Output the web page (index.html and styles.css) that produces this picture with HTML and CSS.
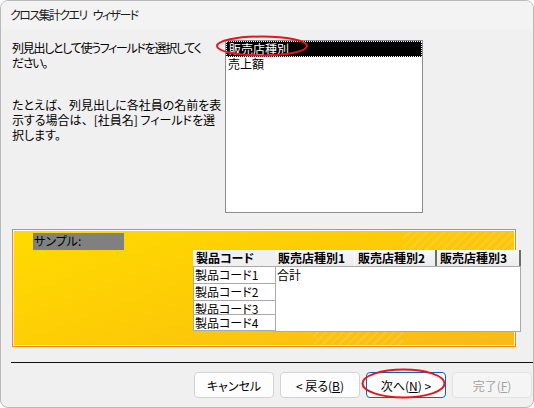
FILE: index.html
```html
<!DOCTYPE html>
<html lang="ja">

<head>
  <meta charset="UTF-8">
  <meta name="viewport" content="width=device-width, initial-scale=1">
  <title>クロス集計クエリ ウィザード</title>
  <link rel="stylesheet" href="styles.css">
</head>

<body>

  <div class="window">
    <div class="titlebar">クロス集計クエリ ウィザード</div>

    <div class="content">
      <div class="top">
        <div class="intro">
          <p class="lead">列見出しとして使うフィールドを選択してく<br>ださい。</p>
          <p class="hint">たとえば<span class="wide">、</span>列見出しに各社員の名前を表<br>示する場合は<span class="wide">、</span>[社員名] フィールドを選<br>択します。</p>
        </div>
        <ul class="fields">
          <li class="selected">販売店種別</li>
          <li>売上額</li>
        </ul>
      </div>

      <!-- サンプル表示 -->
      <div class="sample">
        <div class="sample-label">サンプル:</div>
        <div class="grid">
          <div class="row-heads">
            <div class="corner">製品コード</div>
            <div class="rh">製品コード1</div>
            <div class="rh">製品コード2</div>
            <div class="rh short">製品コード3</div>
            <div class="rh last">製品コード4</div>
          </div>
          <div class="cols">
            <div class="col-heads">
              <div class="ch c1">販売店種別1</div>
              <div class="ch c2">販売店種別2</div>
              <div class="ch c3">販売店種別3</div>
            </div>
            <div class="cells">合計</div>
          </div>
        </div>
      </div>

      <div class="divider"></div>

      <div class="buttons">
        <button>キャンセル</button>
        <button>&lt;&nbsp;戻る(<u>B</u>)</button>
        <button class="default">次へ(<u>N</u>)&nbsp;&gt;</button>
        <button class="disabled">完了(<u>F</u>)</button>
      </div>
    </div>

    <svg class="marks" width="534" height="408">
      <ellipse cx="262" cy="46" rx="45" ry="9.5" fill="none" stroke="#e8141c" stroke-width="2" />
      <ellipse cx="403.5" cy="383.5" rx="41" ry="14" fill="none" stroke="#e8141c" stroke-width="2" />
    </svg>
  </div>

</body>

</html>
```

FILE: styles.css
```css
* {
  box-sizing: border-box;
}

body {
  margin: 0;
  background: #fff;
  font-family: "Noto Sans CJK JP", "Noto Sans", sans-serif;
  font-size: 12px;
  color: #000;
  font-feature-settings: "palt";
}

.window {
  position: relative;
  width: 534px;
  height: 408px;
  background: #f0f0f0;
  border: 1px solid #b9b9b9;
  border-radius: 8px;
  overflow: hidden;
}

.titlebar {
  height: 29px;
  line-height: 28px;
  padding-left: 9px;
  background: #f3f3f3;
  color: #1b1b1b;
  letter-spacing: -1.6px;
  word-spacing: 5px;
}

.content {
  padding: 10px 0 0 11px;
}

/* 上段: 説明文とフィールド一覧 */
.top {
  display: flex;
}

.intro {
  width: 213px;
  white-space: nowrap;
}

.intro p {
  margin: 0;
  line-height: 15px;
}

.intro .lead {
  letter-spacing: -1.3px;
}

.intro .hint {
  margin-top: 27px;
}

.wide {
  font-feature-settings: normal;
}

.fields {
  width: 198px;
  height: 173px;
  margin: 0;
  padding: 0;
  list-style: none;
  background: #fff;
  border: 1px solid #8b8b93;
}

.fields li {
  height: 16px;
  line-height: 14px;
  padding-left: 2px;
}

.fields li.selected {
  background: #000;
  color: #fff;
  border: 1px dotted #fff;
}

/* サンプル */
.sample {
  width: 504px;
  height: 118px;
  margin-top: 16px;
  border: 1px solid #f7890c;
  box-shadow: inset 0 0 0 1px #fff;
  background:
    repeating-linear-gradient(135deg, rgba(255, 255, 255, 0) 0 4px, rgba(255, 255, 255, 0.12) 4px 6px) 390px 2px / 110px 20px no-repeat,
    repeating-linear-gradient(135deg, rgba(255, 255, 255, 0) 0 4px, rgba(255, 255, 255, 0.12) 4px 6px) 300px 100px / 90px 16px no-repeat,
    linear-gradient(160deg, #ffdb00 0%, #fdcc05 45%, #f9b91a 100%);
  padding-top: 3px;
}

.sample-label {
  width: 91px;
  height: 17px;
  margin-left: 20px;
  background: #808080;
  line-height: 16px;
  padding-left: 1px;
}

.grid {
  display: flex;
  margin-left: 180px;
  width: 328px;
}

.row-heads {
  width: 82px;
}

.corner {
  height: 16px;
  line-height: 15px;
  padding-left: 3px;
  background: #f0f0f0;
  font-weight: bold;
}

.rh {
  height: 17px;
  line-height: 16px;
  padding-left: 1px;
  background: #fff;
  border-top: 1px solid #a9a9a9;
  border-left: 1px solid #a9a9a9;
  overflow: hidden;
}

.rh.short {
  height: 14px;
}

.rh.last {
  height: 17px;
  border-bottom: 1px solid #a9a9a9;
}

.cols {
  width: 246px;
}

.col-heads {
  display: flex;
  height: 16px;
}

.ch {
  line-height: 15px;
  padding-left: 3px;
  font-weight: bold;
  background: linear-gradient(#f7f7f7, #ececec);
}

.ch.c1 {
  width: 80px;
  border-right: 1px solid #fdfdfd;
}

.ch.c2 {
  width: 82px;
  border-right: 2px solid #6d6d6d;
}

.ch.c3 {
  width: 84px;
  border-right: 2px solid #6d6d6d;
}

.cells {
  height: 66px;
  background: #fff;
  border: 1px solid #a9a9a9;
  padding-left: 1px;
  line-height: 15px;
}

.divider {
  height: 1px;
  margin: 15px 0 0 -1px;
  background: #111;
}

.buttons {
  display: flex;
  gap: 6px;
  margin: 9px 0 0 182px;
}

button {
  width: 80px;
  height: 26px;
  padding: 0;
  font: inherit;
  color: #000;
  background: #fdfdfd;
  border: 1px solid #d3d3d3;
  border-radius: 4px;
}

button.default {
  border-color: #0067c0;
}

button.disabled {
  background: #f5f5f5;
  border-color: #e2e2e2;
  color: #a2a2a2;
}

.marks {
  position: absolute;
  top: -1px;
  left: -1px;
  pointer-events: none;
}
```
